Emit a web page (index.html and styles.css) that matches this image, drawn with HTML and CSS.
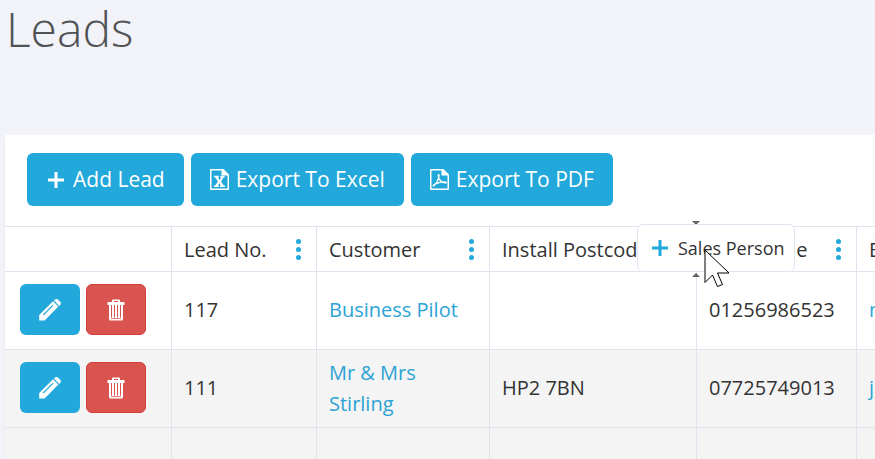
FILE: index.html
```html
<!DOCTYPE html>
<html lang="en">
<head>
<meta charset="utf-8">
<title>Leads</title>
<link rel="stylesheet" href="styles.css">
</head>
<body>
<svg class="sprite" aria-hidden="true">
  <symbol id="plus" viewBox="0 0 16 16"><path d="M6.5 0h3v6.500H16v3H9.500V16h-3V9.500H0v-3h6.500z"/></symbol>
  <symbol id="pencil" viewBox="0 0 22 22"><path fill-rule="evenodd" d="M.2 16 14 2.200l5.400 5.400L5.600 21.400H.2zM3.800 15.600l.8.800 9.900-9.900-.8-.8z"/><path d="M15 1.400l.8-.8q1.800-1.400 3.600.300l1.600 1.600q1.700 1.800.200 3.500l-.900.900z"/></symbol>
  <symbol id="trash" viewBox="0 0 18 22"><path fill-rule="evenodd" d="M5 3V1.500Q5 .5 6 .5h6q1 0 1 1V3h4.500v3H16v14q0 1.500-1.500 1.500h-11Q2 21.500 2 20V6H.500V3zM7 3h4V2H7zM4 6v12.500h1V6zM7 6v12.500h1V6zM10 6v12.500h1V6zM13 6v12.500h1V6zM4 19.200v.8h10v-.800z"/></symbol>
  <symbol id="excel" viewBox="0 0 19 21"><path fill-rule="evenodd" d="M1 0h12.500L19 5.500V20q0 1-1 1H1q-1 0-1-1V1q0-1 1-1zM1.500 1.500v18h16V6.500h-6v-5z"/><path d="M4.200 6.800h4.600v1.700h-.700l1.500 2.400 1.500-2.400h-.7V6.800h4.200v1.700h-1.100l-2.500 3.900 2.700 4h1.200V18h-5v-1.600h.9l-1.400-2.200-1.400 2.200h.8V18H4v-1.600h1.200l2.700-4-2.500-3.900H4.200z"/></symbol>
  <symbol id="pdf" viewBox="0 0 19 21"><path fill-rule="evenodd" d="M1 0h12.500L19 5.500V20q0 1-1 1H1q-1 0-1-1V1q0-1 1-1zM1.500 1.500v18h16V6.500h-6v-5z"/><path class="stroke" d="M3.500 17c2-1.200 5.500-6.500 5.600-10.500 0-1-1-1-.900 0 .3 4 3.500 7.500 7.300 7.500 1.200 0 1-1-.500-1-3.500-.200-7 .8-9.600 1.800-1.700.8-2.700 2-1.900 2.200z"/></symbol>
</svg>
<h1 class="title">Leads</h1>
<main class="panel">
  <div class="toolbar">
    <button class="btn" type="button"><svg class="icon-plus"><use href="#plus"/></svg>Add Lead</button>
    <button class="btn" type="button"><svg class="icon-file"><use href="#excel"/></svg>Export To Excel</button>
    <button class="btn" type="button"><svg class="icon-file"><use href="#pdf"/></svg>Export To PDF</button>
  </div>
  <div class="grid">
    <table class="leads">
      <colgroup><col class="col-actions"><col class="col-no"><col class="col-customer"><col class="col-postcode"><col class="col-phone"><col class="col-email"></colgroup>
      <thead>
        <tr>
          <th></th>
          <th><div class="head">Lead No.<button class="menu" type="button" aria-label="Lead No. menu"><i></i><i></i><i></i></button></div></th>
          <th><div class="head">Customer<button class="menu" type="button" aria-label="Customer menu"><i></i><i></i><i></i></button></div></th>
          <th><div class="head">Install Postcode<button class="menu" type="button" aria-label="Install Postcode menu"><i></i><i></i><i></i></button></div></th>
          <th class="drop-target">
            <div class="head">Telephone<button class="menu" type="button" aria-label="Telephone menu"><i></i><i></i><i></i></button></div>
            <span class="marker marker-top"></span><span class="marker marker-bottom"></span>
            <div class="drag"><svg class="icon-plus"><use href="#plus"/></svg>Sales Person
              <svg class="cursor" viewBox="0 0 26 39"><path d="M1 1v32.500l7.500-7.500 5 11.500 5-2-5-11.500h11.500z"/></svg>
            </div>
          </th>
          <th><div class="head">Email</div></th>
        </tr>
      </thead>
      <tbody>
        <tr>
          <td class="actions"><div class="pair"><button class="act" type="button" aria-label="Edit"><svg class="icon-pencil"><use href="#pencil"/></svg></button><button class="act act-delete" type="button" aria-label="Delete"><svg class="icon-trash"><use href="#trash"/></svg></button></div></td>
          <td>117</td><td><a href="#">Business Pilot</a></td><td></td><td>01256986523</td><td><a href="#">mail</a></td>
        </tr>
        <tr class="alt">
          <td class="actions"><div class="pair"><button class="act" type="button" aria-label="Edit"><svg class="icon-pencil"><use href="#pencil"/></svg></button><button class="act act-delete" type="button" aria-label="Delete"><svg class="icon-trash"><use href="#trash"/></svg></button></div></td>
          <td>111</td><td><a href="#">Mr &amp; Mrs Stirling</a></td><td>HP2 7BN</td><td>07725749013</td><td><a href="#">james</a></td>
        </tr>
        <tr class="alt"><td></td><td></td><td></td><td></td><td></td><td></td></tr>
      </tbody>
    </table>
  </div>
</main>
</body>
</html>
```
FILE: styles.css
```css
* { box-sizing: border-box; }

body {
  margin: 0;
  overflow: hidden;
  background: #f2f3f8;
  color: #333;
  font: 20px/31px "Open Sans", sans-serif;
}

button { border: 0; padding: 0; font: inherit; cursor: pointer; }
a { color: #2ba3d4; text-decoration: none; }
svg { flex: none; fill: currentColor; }
.sprite { display: none; }
.stroke { fill: none; stroke: currentColor; stroke-width: 1.300; }

.title {
  margin: 0 0 77px;
  padding-left: 6px;
  color: #505256;
  font-size: 48px;
  font-weight: 300;
  line-height: 58px;
}

.panel {
  margin-left: 5px;
  background: #fff;
  box-shadow: -1px 2px 2px #eceef5;
}

.toolbar {
  display: flex;
  gap: 7px;
  padding: 18px 22px 20px;
}

.btn {
  display: flex;
  align-items: center;
  gap: 7px;
  height: 53px;
  padding: 0 19px;
  border-radius: 6px;
  background: #22a8da;
  color: #fff;
  font-size: 21px;
  white-space: nowrap;
}

.icon-plus { width: 16px; height: 16px; margin: 0 2px; }
.icon-file { width: 19px; height: 21px; }

.grid { overflow: hidden; margin-top: -6px; padding-top: 6px; }

.leads {
  width: 100%;
  min-width: 1052px;
  table-layout: fixed;
  border-collapse: separate;
  border-spacing: 0;
  border-top: 1px solid #e0e3ee;
}

.col-actions { width: 167px; }
.col-no { width: 145px; }
.col-customer { width: 173px; }
.col-postcode { width: 207px; }
.col-phone { width: 160px; }

th, td {
  padding: 0 12px;
  border-right: 1px solid #e0e3ee;
  border-bottom: 1px solid #e0e3ee;
  text-align: left;
  font-weight: 400;
}

th { height: 45px; white-space: nowrap; }
td { height: 78px; padding-bottom: 2px; }
.alt { background: #f4f4f4; }

.head { display: flex; align-items: center; justify-content: space-between; }
.menu {
  display: flex;
  flex-direction: column;
  align-items: center;
  gap: 3px;
  width: 11px;
  padding-top: 1px;
  background: none;
}
.menu i { width: 5px; height: 5px; border-radius: 50%; background: #22a8da; }

.actions { padding-left: 15px; }
.pair { display: flex; gap: 6px; }
.act {
  display: flex;
  align-items: center;
  justify-content: center;
  width: 60px;
  height: 51px;
  border-radius: 6px;
  background: #22a8da;
  color: #fff;
}
.act-delete { border: 1px solid #d43f3a; background: #d9534f; }
.icon-pencil { width: 22px; height: 22px; }
.icon-trash { width: 18px; height: 22px; }

.drop-target { position: relative; }
.marker {
  position: absolute;
  left: -5px;
  border: 4px solid transparent;
}
.marker-top { top: -6px; border-top-color: #656565; border-bottom: 0; }
.marker-bottom { bottom: -6px; border-bottom-color: #656565; border-top: 0; }

.drag {
  position: absolute;
  top: -3px;
  left: -60px;
  display: flex;
  align-items: center;
  gap: 8px;
  height: 48px;
  padding: 0 9px 0 12px;
  border: 1px solid #e2e5ef;
  border-radius: 6px;
  background: #fff;
  font-size: 18px;
}
.drag .icon-plus { color: #22a8da; }
.cursor {
  position: absolute;
  top: 24px;
  left: 66px;
  width: 26px;
  height: 39px;
  fill: #fff;
  stroke: #000;
  stroke-width: 1;
}
```
